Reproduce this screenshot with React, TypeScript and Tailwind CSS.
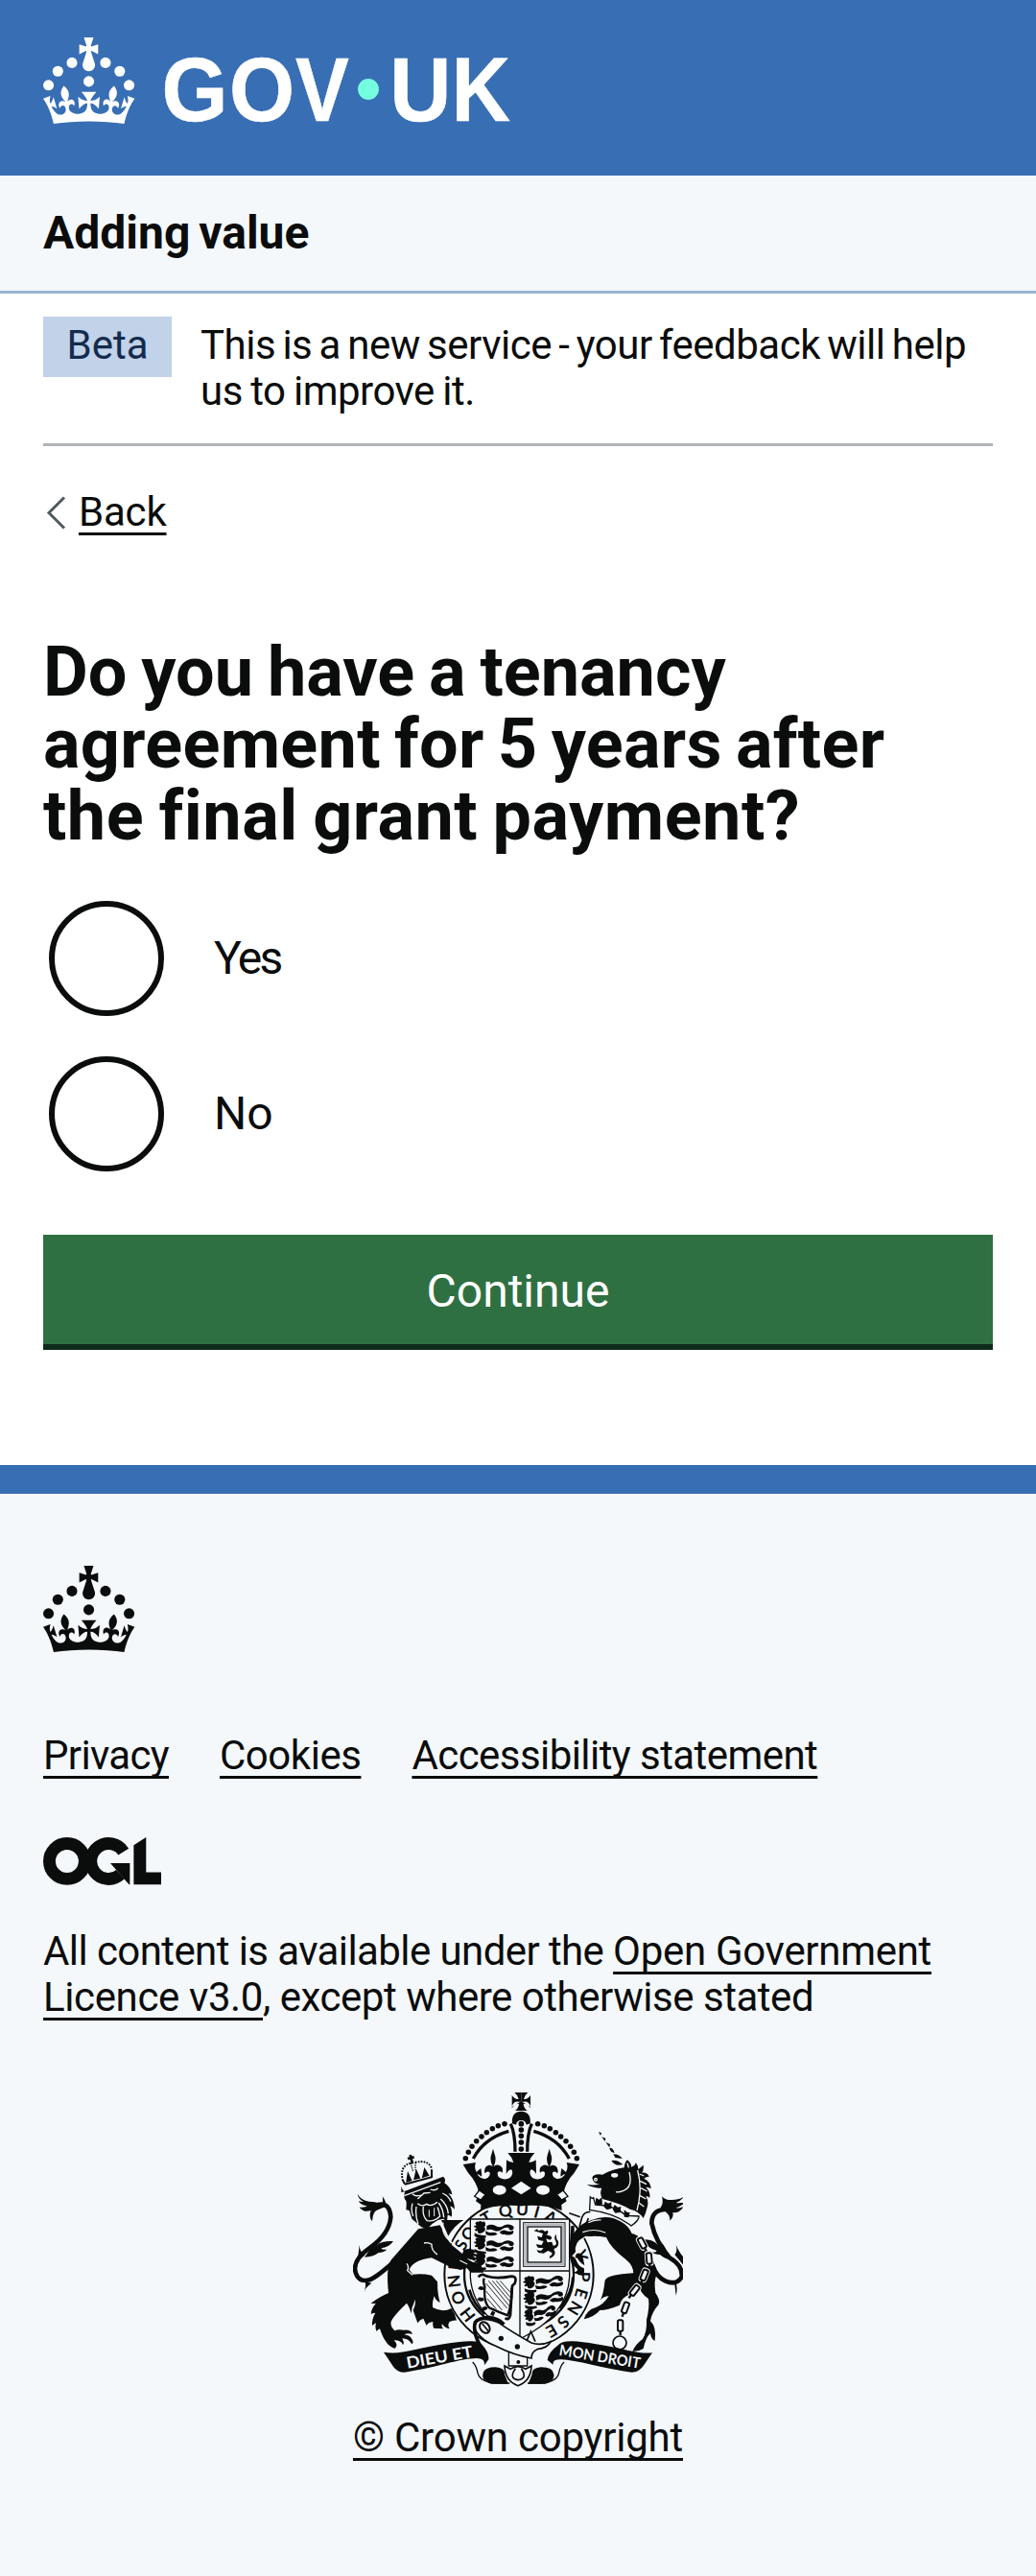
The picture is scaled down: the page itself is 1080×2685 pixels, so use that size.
import React from "react";

const INK = "#0b0c0c";
const PAPER = "#f4f8fb";

function CrownShapes() {
  return (
    <g>
      <circle cx="20" cy="17.6" r="3.7" />
      <circle cx="10.2" cy="23.5" r="3.7" />
      <circle cx="3.7" cy="33.2" r="3.7" />
      <circle cx="31.7" cy="30.6" r="3.7" />
      <circle cx="43.3" cy="17.6" r="3.7" />
      <circle cx="53.2" cy="23.5" r="3.7" />
      <circle cx="59.7" cy="33.2" r="3.7" />
      <path d="M33.1,9.8c.2-.1.3-.3.5-.5l4.6,2.4v-6.8l-4.6,1.5c-.1-.2-.3-.3-.5-.5l1.9-5.9h-6.7l1.9,5.9c-.2.1-.3.3-.5.5l-4.6-1.5v6.8l4.6-2.4c.1.2.3.3.5.5l-2.6,8c-.9,2.8,1.2,5.7,4.1,5.7h0c3,0,5.1-2.9,4.1-5.7l-2.6-8ZM37,37.9s-3.4,3.8-4.1,6.1c2.2,0,4.2-.5,6.4-2.8l-.7,8.5c-2-2.8-4.4-4.1-5.7-3.8.1,3.1.5,6.7,5.8,7.2,3.7.3,6.7-1.5,7-3.8.4-2.6-2-4.3-3.7-1.6-1.4-4.5,2.4-6.1,4.9-3.2-1.9-4.5-1.8-7.7,2.4-10.9,3,4,2.6,7.3-1.2,11.1,2.4-1.3,6.2,0,4,4.6-1.2-2.8-3.7-2.2-4.2.2-.3,1.7.7,3.7,3,4.2,1.9.3,4.7-.9,7-5.9-1.3,0-2.4.7-3.9,1.7l2.4-8c.6,2.3,1.4,3.7,2.2,4.5.6-1.6.5-2.8,0-5.3l5,1.8c-2.6,3.6-5.2,8.7-7.3,17.5-7.4-1.1-15.7-1.7-24.5-1.7h0c-8.8,0-17.1.6-24.5,1.7-2.1-8.9-4.7-13.9-7.3-17.5l5-1.8c-.5,2.5-.6,3.7,0,5.3.8-.8,1.6-2.3,2.2-4.5l2.4,8c-1.5-1-2.6-1.7-3.9-1.7,2.3,5,5.2,6.2,7,5.9,2.3-.4,3.3-2.4,3-4.2-.5-2.4-3-3.1-4.2-.2-2.2-4.6,1.6-6,4-4.6-3.7-3.7-4.2-7.1-1.2-11.1,4.2,3.2,4.3,6.4,2.4,10.9,2.5-2.8,6.3-1.3,4.9,3.2-1.8-2.7-4.1-1-3.7,1.6.3,2.3,3.3,4.1,7,3.8,5.4-.5,5.7-4.2,5.8-7.2-1.3-.2-3.7,1-5.7,3.8l-.7-8.5c2.2,2.3,4.2,2.7,6.4,2.8-.7-2.3-4.1-6.1-4.1-6.1h10.6,0Z" />
    </g>
  );
}

// Each wordmark letter: character, left edge and advance width.
const WORDMARK: [string, number, number][] = [
  ["G", 82.4, 46],
  ["O", 129.3, 45.4],
  ["V", 175.4, 37.2],
  ["U", 240.8, 42.8],
  ["K", 283.8, 40.8],
];

function GovLogo() {
  return (
    <svg viewBox="0 0 324 60" className="block h-[90px] w-[486px] overflow-visible text-white" fill="currentColor" aria-label="GOV.UK">
      <CrownShapes />
      <circle cx="226" cy="36" r="7.3" fill="#75fde0" />
      <g fontFamily="'Liberation Sans', sans-serif" fontWeight="700" fontSize="63.5" stroke="#fff" strokeWidth="0.4">
        {WORDMARK.map(([ch, x, w]) => (
          <text key={ch} x={x} y="57.7" textLength={w} lengthAdjust="spacingAndGlyphs">
            {ch}
          </text>
        ))}
      </g>
    </svg>
  );
}

function OglLogo() {
  return (
    <svg viewBox="0 0 483.2 195.7" className="block h-[50px] w-[123px]" aria-label="OGL" fill={INK}>
      <circle cx="97.8" cy="97.8" r="72.4" fill="none" stroke={INK} strokeWidth="50.6" />
      <path d="M329 59 A72.4 72.4 0 1 0 316 152" fill="none" stroke={INK} strokeWidth="50.6" />
      <path d="M275 105.7h80v87.8h-3l-19.4-22.2-33.3-38.1z" />
      <path d="M370.8 32.4 421.5 .1v142.7h61.7v50.7H370.8z" />
    </svg>
  );
}

// Garter lettering: character and its clockwise angle from the top of the ring.
const GARTER: [string, number][] = [
  ["H", -128], ["O", -111], ["N", -96], ["I", -84],
  ["S", -63], ["O", -51], ["T", -30], ["Q", -12], ["U", 3], ["I", 16], ["A", 29],
  ["Y", 73], ["P", 92], ["E", 107], ["N", 121], ["S", 137], ["E", 150],
];

const BEADS: [number, number][] = [
  [406, 269], [415, 250], [426, 232], [440, 215], [456, 201], [472, 188], [490, 176], [508, 167], [528, 161],
];

const LINKS: [number, number, number][] = [
  [958, 534, -28], [980, 582, -5], [965, 634, 22], [935, 682, 38], [906, 736, 20], [890, 792, 0],
];

function HeraldicLion({ x, y, r = 0 }: { x: number; y: number; r?: number }) {
  return (
    <g transform={`translate(${x} ${y}) rotate(${r})`} fill={INK}>
      <path d="M2 6q6-8 10-4q6-6 12 0q8-4 10 4q2 8-4 12q6 4 2 12q-8 10-18 8q-6-2-4-8q-8 2-10-4q6-2 6-6q-8 0-8-6q6 0 8-2z" />
      <path d="M38 14q14-8 28 0t28-2q14-6 26 2q8 10-4 14q-12-2-8-8q-14-2-24 6t-24 2q-12-6-22 0z" />
      <path d="M34 30q16 8 24 4q10 0 14 6q-14 8-36 2zM78 34q12-10 22-4q14 4 20-2q6 10-6 14q-14 2-20-2q-8 4-16-6z" />
      <path d="M0 36q14 10 34 8q6 6-2 8q-20 4-32-6z" />
    </g>
  );
}

function CrownHalf() {
  return (
    <g>
      {BEADS.map(([x, y]) => (
        <circle key={x} cx={x} cy={y} r="8.3" />
      ))}
      <path d="M430 270Q464 206 541 184" fill="none" stroke={INK} strokeWidth="10" />
      <path d="M547 161q14 30 14 87" fill="none" stroke={INK} strokeWidth="10" />
      <path d="M398 288l40-6q-6 16 2 30l14-12q4 22 2 26q-8-8-14-8q12 18 28 14q14-6 12-18q-6-8-16 2q-4-22 14-26q8 0 11 5q-9-18-6-32l7-24l7 24q3 16-5 32q6-8 16-5q16 6 11 24q-10-8-15 0q-2 16 18 20q24 2 28-16q2-10-3-14q-10 2-16 14l1-44q8 8 22 8q-4-16-18-30h46v166q-80-6-131 14l1-18l-16-11l10-26q-8-35-34-63z" />
      <ellipse cx="512" cy="368" rx="21" ry="15" fill={PAPER} />
      <path d="M449 369l19 13l-14 17l-20-11z" fill={PAPER} stroke={INK} strokeWidth="4" />
      <path d="M580 63v29h-8q-14-4-21 14v-34q10 14 21 12q-2-12-13-21z" />
      <path d="M551 108v4q8-14 22-14q0 12-12 22h20v-30z" />
    </g>
  );
}

function RoyalArms() {
  return (
    <svg viewBox="54 60 1032 924" className="block h-[308px] w-[344px]" fill={INK} aria-hidden="true">
      {/* garter ring */}
      <circle cx="573" cy="632" r="233" fill={PAPER} stroke={INK} strokeWidth="6" />
      <circle cx="573" cy="632" r="171" fill={PAPER} stroke={INK} strokeWidth="7" />
      <path d="M418 680q12 44 48 76M742 640q-2 50-42 98" fill="none" stroke={INK} strokeWidth="8" />
      <g fontFamily="Lato, sans-serif" fontWeight="700" fontSize="52" textAnchor="middle">
        {GARTER.map(([ch, a]) => (
          <text key={a} transform={`translate(573 632) rotate(${a}) translate(0 -185)`}>
            {ch}
          </text>
        ))}
      </g>

      {/* royal crown */}
      <CrownHalf />
      <g transform="translate(1160 0) scale(-1 1)">
        <CrownHalf />
      </g>
      <path d="M580 341l31 21l-31 20l-31-20z" fill={PAPER} />
      <path d="M552 160q-4-36 28-38q32 2 28 38l-12 4q-2-14-16-14t-16 14z" />
      {[161, 180, 199, 219, 240].map((y) => (
        <circle key={y} cx="580" cy={y} r="8.5" />
      ))}

      {/* shield */}
      <path d="M421 459H731V640Q726 760 576 834Q428 760 421 640Z" fill={PAPER} stroke={INK} strokeWidth="4" />
      <path d="M576 459V830M421 621H731" stroke={INK} strokeWidth="4" />
      <HeraldicLion x={434} y={466} />
      <HeraldicLion x={434} y={516} />
      <HeraldicLion x={434} y={566} />
      <rect x="587" y="470" width="130" height="137" fill="none" stroke={INK} strokeWidth="3" />
      <rect x="593" y="476" width="118" height="125" fill="none" stroke="#b5b9be" strokeWidth="7" />
      <rect x="600" y="483" width="105" height="111" fill="none" stroke={INK} strokeWidth="4" />
      <path d="M620 496l10-6l4 6q14-8 20 2l8-4q6 8-4 14l14 4q8 6-2 12l-12-4l4 12l14-2l4 12q14 0 8-14q-8-14 2-22q-2 14 6 22q4 20-14 24l4 12q-2 14-18 18l2-8q8-2 6-10l-12-6l-14 8l-16-2l-6-8l14 2l8-8l-18-2l-6-10l18 2l6-12l-16-4l-4-12l14 4l4-12z" />
      <g fill="none" stroke={INK}>
        <path d="M446 640q10-12 22-4q30 12 82 2q18 0 10 22l-8 8l-6 92q-6 18-16 8" strokeWidth="8" />
        <path d="M464 644q-4 12 2 26q-4 50 14 66q30 14 58 24q14-40 12-86" strokeWidth="7" />
        <path d="M470 660l66 78M478 652l66 80M490 652l56 66M502 652l46 54M514 652l34 38M470 684l50 60M474 708l28 32" strokeWidth="2.6" />
        <path d="M448 672q6 6 14 2M446 706q6 8 16 2M458 738q8 4 14-4M488 760l6-12" strokeWidth="11" />
      </g>
      <HeraldicLion x={586} y={640} r={-7} />
      <HeraldicLion x={586} y={692} r={-9} />
      <g transform="scale(.8 1)">
        <HeraldicLion x={734} y={746} r={-14} />
      </g>

      {/* lion supporter */}
      <g fill="none" stroke={INK} strokeLinecap="round">
        <path d="M118 418Q168 398 172 452Q168 505 108 548Q54 585 61 622Q70 660 108 648Q132 638 190 585" strokeWidth="14" />
      </g>
      <path d="M68 381q12 20 36 23q24 0 38 10q8-8 4-26q14 18 10 32l-24 10q-16 4-18 36q-12-14-4-34q-22 8-36-10q14 2 24-4q-24-4-26-16q10 4 14 2q-16-8-18-23z" />
      <path d="M180 528q-34-2-52 12q0-10 6-18q-22 12-28 34l-16 22q26 0 44-14q18-2 26-10q-14 2-18-4q24-2 38-22zM74 540l-4 34l-14 28q18-22 36-30q-18-10-18-32zM92 655q4 14-4 34q4-16 24-30z" />
      <path d="M258 490L174 586Q156 610 165 690Q140 700 110 722q10 2 16 0q-14 14-16 34q8-4 14-4q-12 20-10 40q8-6 12-8q-4 16 2 26q4-6 10-8q8 26 20 42q8 12 26 20q14-10-2-26q24 0 28 14q6-2-2-20q20 0 30 18q6-4 2-12q-6-16-26-18q10-6 26-2q-6-14-26-12q-20-4-30 2q-20-20-6-38q14-20 44-48q8 10 14 32q2-22 10-36q12-24 4-60q-2-22-20-40q10-30 70-38q40 20 60 30l30 8l20-6l12 14l40 0l-8-26l-28-8l-66-54l-34-60z" />
      <path d="M330 462H400Q370 480 352 512z" />
      <path d="M240 632q30-4 60 3l18 20q0 40 8 65q-12-4-18-20q-8 24-4 36q30 16 58 2q12 18 16 38q-10-2-22 4q-8 10 0 22q-14-2-24-16q-2 10 4 16l-30-2q-4-12-2-20q-16 2-20 12l-10-22q-10 2-18 14l-14-40q12-20 4-50z" />
      <path d="M205 376L336 326q10 8 4 20q20 14 24 36q-6-2-12-4q18 18 20 50q-8-8-14-10q8 18 4 34q-6-6-12-6l-2 20l-12-8l-16 4q-20 10-34 28l-18-6l-30-26l-8-26l-10-2q2-20 0-28q-10-10-4-26q-10-12-11-20z" />
      <g fill="none" stroke={PAPER} strokeWidth="4">
        <path d="M214 386L328 344M256 396L276 378L296 376M240 380q10 10 26 4M296 366q14 6 24-4M256 410q14 12 28 2q14 10 34-6M274 420q-4 30 12 44q22 4 40-14q-4-20-8-28M240 410q-6 20 2 40M252 420q-4 30 6 54M328 396q22 20 24 46M322 408q14 20 16 46M334 378q18 8 26 26" />
        <path d="M292 452V430M308 450V424" strokeWidth="3" />
        <path d="M336 470q-6 26 10 46q20 24 52 42M276 534q14-4 24 4q-2 18 18 32M222 598q8 10 2 22l16 14" />
        <path d="M400 562l30 18M396 576l34 16M388 588l24 12M436 566l-14-10" strokeWidth="3.5" />
      </g>
      <path d="M400 556q24-10 40 4l-10 6q10 0 12 10l-14-2q12 6 8 16q-16-8-26-8q12 8 16 26q-20-16-36-22z" />
      <g fill="none" stroke={INK} strokeWidth="4">
        <path d="M216 350L300 328L300 304M216 350L208 334" strokeWidth="6" />
        <path d="M222 342l4-26l10 22zM246 334l6-26l10 22zM272 328l6-26l12 20z" fill={INK} />
        <path d="M208 330Q202 292 234 284M248 282Q288 272 300 300" strokeDasharray="5 4" strokeWidth="6" />
        <path d="M234 284q4 14 8 26M250 282q-2 12 0 24" strokeDasharray="4 3" />
        <path d="M225 270l20-5M233 258l7 28" strokeWidth="8" />
      </g>

      {/* unicorn supporter */}
      <path d="M822 186l9 4l-3 8zM832 202l12 4l-2 10zM844 218l14 7l-2 10zM856 236q12 0 16 16q-14-2-16-16zM868 256q20 0 28 14l-22-3zM862 276q18-4 36 12q-24 8-36-12z" />
      <path d="M802 330Q806 316 834 320Q868 302 902 298Q904 280 912 274Q926 286 924 296Q938 292 938 282Q948 294 946 304L962 290Q964 304 958 314Q974 312 980 326Q970 326 964 332Q984 340 986 364Q976 358 970 360Q984 372 982 392Q976 386 970 388Q980 404 974 422Q970 440 962 456Q948 434 920 428Q890 410 834 396Q824 378 832 362Q812 364 785 351Q808 354 826 350Q806 350 802 330Z" />
      <g fill="none" stroke={PAPER} strokeWidth="4">
        <ellipse cx="872" cy="322" rx="9" ry="5" fill={PAPER} />
        <circle cx="813" cy="335" r="4" />
        <path d="M918 312q12 46-18 58q-14 6-24 4M944 306q16 60-2 126M950 318l14 6M952 340l20 10M954 362l20 10M952 386l18 10M948 408l16 12M912 284l4 14" />
      </g>
      <path d="M796 390Q802 396 806 392L812 414Q870 414 908 448L948 450Q950 462 924 480L916 474Q870 440 794 430Z" fill={PAPER} stroke={INK} strokeWidth="4" />
      <path d="M814 392l10 6l8-8l2 22l-14 6l-8-8zM842 404l10 6l10-4v20l-14 4l-10-10zM872 414l10 8l10-2l-2 18l-16 2l-8-12zM902 430l10 8l8 0l-4 16l-14-2z" />
      <path d="M796 436q-20 0-26 18l-8 30M790 456l-10 28M730 440l34 12" fill="none" stroke={INK} strokeWidth="5" />
      <path d="M800 462Q850 442 890 466Q916 480 926 504Q960 510 974 560Q1000 590 1004 632Q994 650 1000 690Q1016 712 1010 726Q988 750 984 778Q1004 796 998 840Q986 834 984 816Q970 828 962 864Q946 874 928 872Q938 850 960 834Q974 810 972 774Q982 736 978 708Q950 690 948 664Q932 690 920 694Q894 704 888 728Q850 744 826 744Q810 764 776 772Q786 742 812 736Q838 726 854 700Q838 700 828 712Q838 690 842 650Q852 632 930 628Q932 606 908 586Q860 550 846 516Q800 508 772 518Q746 530 750 562L734 580Q724 540 742 508Q764 470 800 462Z" />
      <path d="M736 480h10v40l-14 20zM734 574q14 0 20 18q8 18 22 20q4 14-4 24l-30-10q24-4 8-16q-18-14-16-36zM750 570q16-10 22 4l6 30q-18-10-28-34z" />
      <path d="M772 500q40-14 72 2M756 560q4-36 26-46l60 6M790 470q20-10 40-8M890 590q30 10 40 36" fill="none" stroke={PAPER} strokeWidth="3.5" />
      <g fill="none" stroke={INK} strokeLinecap="round">
        <path d="M1046 428Q988 424 988 472Q1000 530 1044 580Q1086 604 1082 640Q1066 668 1030 652Q1004 640 992 606" strokeWidth="14" />
      </g>
      <path d="M1090 388q-20 14-54 10q-10-2-16-10q6 24-4 34l20 18q12 10 8 24q14-10 10-26q20 4 34-18q-14 6-24 4q18-6 30-18q-20 4-30 2q16-6 26-20zM960 522q34 0 48 18q-2-8-2-16q24 12 30 40l16 22q-24-2-38-16q-16 2-26-8q12 4 16-4q-30-8-44-36zM1064 540q14 30 26 40v26q-20-24-30-36q10-10 4-30zM1060 664q2 16 4 34q6-18 0-40z" />

      {/* chain */}
      {LINKS.map(([x, y, r]) => (
        <g key={y} transform={`translate(${x} ${y}) rotate(${r})`}>
          <rect x="-9" y="-19" width="18" height="38" rx="6" fill={PAPER} stroke={PAPER} strokeWidth="9" />
          <rect x="-8" y="-17" width="16" height="34" rx="5" fill={PAPER} stroke={INK} strokeWidth="6" />
          <path d="M0 18v12" stroke={INK} strokeWidth="7" />
        </g>
      ))}
      <circle cx="888" cy="846" r="21" fill={PAPER} stroke={INK} strokeWidth="5" />

      {/* motto scroll */}
      <path d="M150 875Q190 882 245 868Q360 842 420 841Q450 840 458 852Q480 876 478 898L465 916Q468 894 440 894Q410 894 340 912Q270 930 215 938Q192 938 180 920Z" />
      <path d="M990 877Q960 880 915 870Q800 844 740 841Q706 840 694 854Q664 876 662 900L680 914Q676 898 704 898Q740 900 800 914Q870 930 925 938Q950 938 964 915Z" />
      <g fontFamily="Lato, sans-serif" fontWeight="700" fill={PAPER}>
        <text transform="translate(224 926) rotate(-10)" fontSize="50" textLength="210" lengthAdjust="spacingAndGlyphs">DIEU ET</text>
        <text transform="translate(697 884) rotate(9.5)" fontSize="47" textLength="256" lengthAdjust="spacingAndGlyphs">MON DROIT</text>
      </g>
      <path d="M428 906Q440 918 444 940Q450 968 500 972H544M714 906Q702 918 698 940Q692 968 642 972H600" fill="none" stroke={INK} strokeWidth="4" />
      <path d="M460 944Q462 922 500 922Q530 924 528 944L540 974H486Q456 966 460 944ZM682 944Q680 922 642 922Q612 924 614 944L602 974H656Q686 966 682 944Z" />

      {/* belt */}
      <path d="M541 874v44h58v-44" fill={PAPER} stroke={INK} strokeWidth="4" />
      <path d="M438 776Q470 766 508 782Q550 812 612 846Q640 856 672 842Q664 862 630 866Q612 874 612 894Q560 886 500 856Q450 836 434 800Z" fill={PAPER} stroke={INK} strokeWidth="5" />
      <path d="M450 852Q428 810 436 782Q446 768 478 766Q510 770 526 788" fill="none" stroke={INK} strokeWidth="11" />
      <ellipse cx="466" cy="798" rx="14" ry="19" transform="rotate(-35 466 798)" fill="none" stroke={INK} strokeWidth="6" />
      <path d="M458 786l20 24M598 838l12-28l14 32" fill="none" stroke={INK} strokeWidth="5" />
      <circle cx="517" cy="832" r="8" />
      <circle cx="568" cy="858" r="8" />
      <circle cx="571" cy="906" r="6" />
      <path d="M528 918l18 10q24-16 48 0l18-10q-2 48-42 62q-40-14-42-62z" fill={PAPER} stroke={INK} strokeWidth="5" />
      <path d="M562 926q-22 32 8 36q32-4 10-36" fill="none" stroke={INK} strokeWidth="5" />
    </svg>
  );
}

const LINK = "underline decoration-[3px] underline-offset-[7px] [text-decoration-skip-ink:none]";

function Radio({ label, tracking }: { label: string; tracking: string }) {
  return (
    <label className="flex h-[120px] items-center pl-1.5">
      <input type="radio" name="tenancy" className="size-[120px] shrink-0 appearance-none rounded-full border-[6px] border-[#0b0c0c] bg-white" />
      <span className={`ml-[52px] text-[48px] leading-[60px] ${tracking}`}>{label}</span>
    </label>
  );
}

export default function App() {
  return (
    <div className="flex min-h-[2685px] w-[1080px] flex-col bg-white font-[Roboto,sans-serif] text-[42px] leading-[48px] text-[#0b0c0c]">
      <header>
        <div className="h-[183px] bg-[#386eb4] px-[45px] pt-[39px]">
          <GovLogo />
        </div>
        <div className="flex h-[123px] items-center border-b-[3px] border-[#98b5d5] bg-[#f4f8fb] px-[45px] text-[48px] leading-[60px] font-bold [word-spacing:-3px]">
          Adding value
        </div>
      </header>

      <div className="px-[45px]">
        <div className="flex h-[159px] items-start border-b-[3px] border-[#b1b4b6] pt-6">
          <strong className="h-[63px] w-[134px] shrink-0 bg-[#c1d2e9] pt-1.5 text-center font-normal text-[#132b4d]">Beta</strong>
          <p className="ml-[30px] pt-1.5 whitespace-nowrap">
            <span className="tracking-[-0.5px] [word-spacing:-2.6px]">This is a new service - your feedback will help</span>
            <br />
            <span className="tracking-[-0.5px] [word-spacing:-1.5px]">us to improve it.</span>
          </p>
        </div>

        <a className="mt-[45px] flex items-center">
          <svg viewBox="0 0 37 48" className="h-12 w-[37px]" fill="none" stroke="#505a5f" strokeWidth="3">
            <path d="M22 8.500L6 24.500L22 40.500" />
          </svg>
          <span className={`${LINK} tracking-[-0.2px]`}>Back</span>
        </a>

        <main>
          <h1 className="mt-[105px] text-[72px] leading-[75px] font-bold whitespace-nowrap">
            <span className="block [word-spacing:-3px]">Do you have a tenancy</span>
            <span className="block tracking-[0.3px] [word-spacing:-4px]">agreement for 5 years after</span>
            <span className="block tracking-[0.5px] [word-spacing:-3px]">the final grant payment?</span>
          </h1>
          <div className="mt-[51px] flex flex-col gap-[42px]">
            <Radio label="Yes" tracking="tracking-[-2.6px]" />
            <Radio label="No" tracking="tracking-normal" />
          </div>
          <button className="mt-[66px] block h-[114px] w-full bg-[#2f7042] pt-[3px] text-center text-[48px] leading-[60px] text-white shadow-[0_6px_0_#0e2b1a]">
            Continue
          </button>
        </main>
      </div>

      <footer className="mt-[126px] flex-1 border-t-[30px] border-[#386eb4] bg-[#f4f8fb] px-[45px] pt-[75px]">
        <svg viewBox="0 0 64 60" className="block h-[90px] w-24" fill={INK}>
          <CrownShapes />
        </svg>
        <nav className="mt-[84px] flex gap-[53px] whitespace-nowrap">
          <a className={`${LINK} tracking-[-0.67px]`}>Privacy</a>
          <a className={`${LINK} tracking-[-0.47px]`}>Cookies</a>
          <a className={`${LINK} tracking-[-0.56px]`}>Accessibility statement</a>
        </nav>
        <div className="mt-[61px]">
          <OglLogo />
        </div>
        <p className="mt-[45px] whitespace-nowrap">
          <span className="tracking-[-0.59px]">All content is available under the </span>
          <a className={`${LINK} tracking-[-0.3px]`}>Open Government</a>
          <br />
          <a className={`${LINK} tracking-[-0.38px]`}>Licence v3.0</a>
          <span className="tracking-[-0.47px]">, except where otherwise stated</span>
        </p>
        <div className="mt-[74px] flex flex-col items-center">
          <RoyalArms />
          <a className={`${LINK} mt-[29px] tracking-[-0.22px]`}>© Crown copyright</a>
        </div>
      </footer>
    </div>
  );
}
